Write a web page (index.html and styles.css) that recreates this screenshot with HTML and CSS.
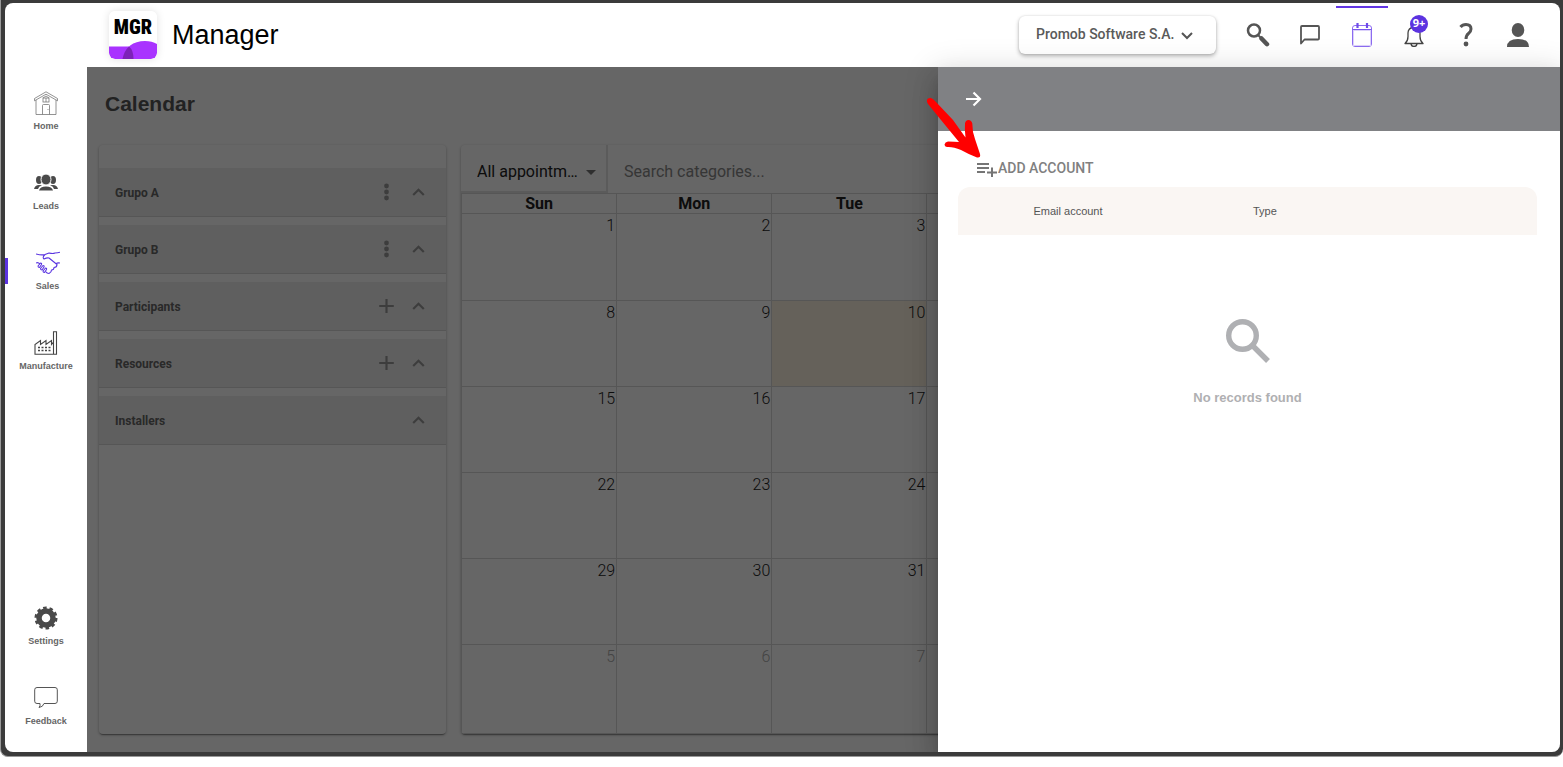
FILE: index.html
```html
<!DOCTYPE html>
<html lang="en">
<head>
<meta charset="utf-8">
<title>Manager - Calendar</title>
<link rel="stylesheet" href="styles.css">
</head>
<body>
<div class="frame">
<div class="app">
  <header class="topbar">
    <a class="brand" href="#">
      <svg class="brand-logo" viewBox="0 0 48 48" width="48" height="48" aria-hidden="true">
        <defs><clipPath id="tile"><rect width="48" height="48" rx="6"/></clipPath></defs>
        <g clip-path="url(#tile)">
          <rect width="48" height="48" fill="#fff"/>
          <path d="M0 35.500h20q4 4 4 12.500H0z" fill="#a933ff"/>
          <path d="M13.500 48C16 36 24 30 36 30q7 0 12 3v15z" fill="#a933ff"/>
          <path d="M13.500 48q1.500-8 6.500-12.500 4.500 3.500 4.500 12.500z" fill="#7d22b8"/>
        </g>
        <text class="brand-mark" x="24" y="23" text-anchor="middle">MGR</text>
      </svg>
      <span class="brand-name">Manager</span>
    </a>
    <div class="company">
      <select class="company-select" aria-label="Company"><option>Promob Software S.A.</option></select>
      <svg class="company-chevron" viewBox="0 0 12 8" width="12" height="8" aria-hidden="true"><path d="M1 1l5 5 5-5" fill="none" stroke="#555" stroke-width="2"/></svg>
    </div>
    <nav class="tools" aria-label="Tools">
      <button class="tool" aria-label="Search"><svg viewBox="0 0 24 24" width="24" height="24"><circle cx="8" cy="7.500" r="6" fill="none" stroke="#555" stroke-width="2.500"/><path d="M12 12l3 3" stroke="#555" stroke-width="2"/><path d="M15.500 15.500l5.500 5.700" stroke="#555" stroke-width="4.500" stroke-linecap="round"/></svg></button>
      <button class="tool" aria-label="Messages"><svg viewBox="0 0 24 24" width="24" height="24"><path d="M3 20.500V4q0-1 1-1h16q1 0 1 1v11.500q0 1-1 1H6.500z" fill="none" stroke="#555" stroke-width="1.800" stroke-linejoin="round"/></svg></button>
      <button class="tool tool-active" aria-label="Calendar"><svg viewBox="0 0 24 24" width="24" height="24"><g fill="none" stroke="#8c6cf0"><rect x="2.500" y="2.500" width="19" height="21" rx="2.500"/><rect x="3.500" y="7.500" width="17" height="15" stroke="#dcd2fb"/><path d="M2.500 6.500h19" stroke="#7a57ec"/></g><path d="M7.500 0v5M17 0v5" stroke="#6f4bea" stroke-width="2.200"/></svg></button>
      <button class="tool" aria-label="Notifications"><svg viewBox="0 0 24 24" width="24" height="24"><path d="M3 20.500q3-2.500 3-7V10q0-5 6-6 6 1 6 6v3.500q0 4.500 3 7zM9 21q.5 2.500 3 2.500t3-2.500" fill="none" stroke="#444" stroke-width="1.300" stroke-linejoin="round"/></svg><span class="badge">9+</span></button>
      <button class="tool" aria-label="Help"><svg viewBox="0 0 24 24" width="24" height="24"><path d="M6.500 4q2-2.500 5.500-2.500 5 0 5 4.500 0 2.500-2.500 4.500-2.500 2-2.500 5.500" fill="none" stroke="#555" stroke-width="3"/><circle cx="12" cy="21" r="2.400" fill="#555"/></svg></button>
      <button class="tool" aria-label="Profile"><svg viewBox="0 0 24 24" width="24" height="24" fill="#555"><ellipse cx="12" cy="7" rx="6.300" ry="7"/><path d="M1 24q0-8 11-8t11 8z"/></svg></button>
    </nav>
  </header>

  <div class="workspace">
    <nav class="sidebar" aria-label="Main">
      <a class="side-item" href="#"><svg viewBox="0 0 24 24" width="24" height="24" fill="none" stroke="#777" stroke-width=".8"><path d="M.5 7.500L12 .8l11.500 6.700v2.300L12 3.200.5 9.800zM2 9v14.500h20V9M8.500 23.500v-9q0-1 1-1h5q1 0 1 1v9M14 18v1"/><rect x="9" y="7" width="6" height="4"/><path d="M12 7v4M9 7l3-2 3 2"/></svg><span>Home</span></a>
      <a class="side-item" href="#"><svg viewBox="0 0 24 24" width="24" height="24" fill="#4a4a4a"><ellipse cx="5" cy="9" rx="3" ry="4"/><ellipse cx="19" cy="9" rx="3" ry="4"/><ellipse cx="12" cy="8.500" rx="5" ry="5.500" stroke="#fff"/><path d="M0 18q1-4 5-4l3 .3Q4.500 15.500 4 18zM24 18q-1-4-5-4l-3 .3q3.500 1.200 4 3.700zM5 19.500q1-4 7-4t7 4z"/></svg><span>Leads</span></a>
      <a class="side-item side-active" href="#"><svg viewBox="0 0 24 24" width="24" height="24" fill="none" stroke="#5a35e0" stroke-width="1.100" stroke-linejoin="round"><path d="M0 3q6 1.500 9 .5l4-1.500q4 1 6 0 3 0 5-.8M9 3.500q-3 3-1 4.500 3-1.500 5-1l8 6.500q0 3-3 3 0 2.500-2.500 2.500 0 2.500-2.500 3.500-2 0-3.500-2M24 12q-3-.5-4 1M0 12q2-1 4 1"/><path d="M2 15l2.500-3q1.500 0 1 1.500l-2 3q-1.500 0-1.500-1.500zM4.500 17.500l2.500-3q1.500 0 1 1.500l-2 3q-1.500 0-1.500-1.500zM7 20l2.500-3q1.500 0 1 1.500l-2 3q-1.500 0-1.500-1.500z"/></svg><span>Sales</span></a>
      <a class="side-item" href="#"><svg viewBox="0 0 24 24" width="24" height="24" fill="none" stroke="#444" stroke-width="1.100"><path d="M1 23.300V13.500L6.500 9.500v4L12 9.500v4l5.500-4v4L19.500 11V.7h3v22.600zM19.500 10v13"/><path d="M4 16.500h12.500M4 19.500h12.500" stroke-width="1.600" stroke-dasharray="2 1.500"/></svg><span>Manufacture</span></a>
      <a class="side-item side-bottom" href="#"><svg viewBox="0 0 24 24" width="24" height="24"><circle cx="12" cy="12" r="7" fill="none" stroke="#4a4a4a" stroke-width="5.500"/><circle cx="12" cy="12" r="10" fill="none" stroke="#4a4a4a" stroke-width="3" stroke-dasharray="3.500 2.783"/></svg><span>Settings</span></a>
      <a class="side-item" href="#"><svg viewBox="0 0 24 24" width="24" height="24" fill="none" stroke="#555"><path d="M3 1.500h18q2.300 0 2.300 2.300v11.400q0 2.300-2.300 2.300H10q-1 3.500-5 4 1.500-1.500 1-4H3Q.7 17.500.7 15.200V3.800Q.7 1.500 3 1.500z"/></svg><span>Feedback</span></a>
    </nav>

    <main class="page">
      <h1 class="page-title">Calendar</h1>
      <div class="panels">
        <section class="card groups" aria-label="Groups">
          <div class="group"><h2>Grupo A</h2><button aria-label="Options"><svg viewBox="0 0 24 24" width="24" height="24"><use href="#dots"/></svg></button><button aria-label="Collapse"><svg viewBox="0 0 24 24" width="24" height="24"><use href="#up"/></svg></button></div>
          <div class="group"><h2>Grupo B</h2><button aria-label="Options"><svg viewBox="0 0 24 24" width="24" height="24"><use href="#dots"/></svg></button><button aria-label="Collapse"><svg viewBox="0 0 24 24" width="24" height="24"><use href="#up"/></svg></button></div>
          <div class="group"><h2>Participants</h2><button aria-label="Add"><svg viewBox="0 0 24 24" width="24" height="24"><use href="#plus"/></svg></button><button aria-label="Collapse"><svg viewBox="0 0 24 24" width="24" height="24"><use href="#up"/></svg></button></div>
          <div class="group"><h2>Resources</h2><button aria-label="Add"><svg viewBox="0 0 24 24" width="24" height="24"><use href="#plus"/></svg></button><button aria-label="Collapse"><svg viewBox="0 0 24 24" width="24" height="24"><use href="#up"/></svg></button></div>
          <div class="group"><h2>Installers</h2><button aria-label="Collapse"><svg viewBox="0 0 24 24" width="24" height="24"><use href="#up"/></svg></button></div>
        </section>
        <section class="card calendar" aria-label="Month">
          <div class="filters">
            <div class="filter">
              <select class="filter-select" aria-label="Appointments"><option>All appointm…</option></select>
              <svg class="filter-caret" viewBox="0 0 10 5" width="10" height="5" aria-hidden="true"><path d="M0 0h10L5 5z" fill="#757575"/></svg>
            </div>
            <input class="filter-search" type="text" placeholder="Search categories..." aria-label="Search categories">
          </div>
          <div class="month-wrap">
          <table class="month">
            <thead><tr><th>Sun</th><th>Mon</th><th>Tue</th><th></th><th></th><th></th><th></th></tr></thead>
            <tbody>
              <tr><td>1</td><td>2</td><td>3</td><td></td><td></td><td></td><td></td></tr>
              <tr><td>8</td><td>9</td><td class="today">10</td><td></td><td></td><td></td><td></td></tr>
              <tr><td>15</td><td>16</td><td>17</td><td></td><td></td><td></td><td></td></tr>
              <tr><td>22</td><td>23</td><td>24</td><td></td><td></td><td></td><td></td></tr>
              <tr><td>29</td><td>30</td><td>31</td><td></td><td></td><td></td><td></td></tr>
              <tr><td class="other">5</td><td class="other">6</td><td class="other">7</td><td></td><td></td><td></td><td></td></tr>
            </tbody>
          </table>
          </div>
        </section>
      </div>
      <div class="backdrop"></div>
    </main>

    <aside class="drawer" aria-label="Accounts">
      <div class="drawer-head">
        <button class="drawer-close" aria-label="Close"><svg viewBox="0 0 16 16" width="16" height="16"><path d="M0 8h14M7.500 1.500L14 8l-6.500 6.500" fill="none" stroke="#fff" stroke-width="2.200"/></svg></button>
      </div>
      <div class="drawer-body">
        <button class="add-account"><svg viewBox="0 0 20 14" width="20" height="14" aria-hidden="true"><path d="M0 1h12M0 5h12M0 9h8M10 9.500h10M15 4.500v9.500" fill="none" stroke="#757575" stroke-width="2"/></svg>ADD ACCOUNT</button>
        <table class="accounts">
          <colgroup><col class="col-mark"><col class="col-text"><col class="col-text"><col></colgroup>
          <thead><tr><td></td><th>Email account</th><th>Type</th><td></td></tr></thead>
        </table>
        <div class="empty">
          <svg viewBox="0 0 44 44" width="44" height="44" aria-hidden="true"><circle cx="16.500" cy="16.500" r="13.800" fill="none" stroke="#afb0b3" stroke-width="5.400"/><path d="M27.500 27.500L42 42" stroke="#afb0b3" stroke-width="5.400"/></svg>
          <p>No records found</p>
        </div>
      </div>
      <svg class="pointer" viewBox="0 0 62 66" width="62" height="66" aria-hidden="true"><path d="M6 4Q8 4.500 11 8L28 26 40.500 43.500Q39.500 36 40 29.500 40.500 26 43.500 26T47.300 29.500Q47.300 38 50 45L55 60Q56 64 52 63.500 44 60.500 36 56 28 52.500 22 53 19.500 52.500 19.500 50.500 20 48 23 47.500 30 47.500 34 48L16 26 3 10Q1 7 2.500 5 4 3.500 6 4z" fill="#f00"/></svg>
    </aside>
  </div>
</div>
</div>
<svg class="symbols" width="0" height="0" aria-hidden="true">
  <symbol id="dots" viewBox="0 0 24 24"><g fill="#9a9a9a"><circle cx="12.500" cy="6" r="2.400"/><circle cx="12.500" cy="12" r="2.400"/><circle cx="12.500" cy="18" r="2.400"/></g></symbol>
  <symbol id="up" viewBox="0 0 24 24"><path d="M7.200 15l5.300-5.300 5.300 5.300" fill="none" stroke="#9a9a9a" stroke-width="2.200"/></symbol>
  <symbol id="plus" viewBox="0 0 24 24"><path d="M12.500 5v14M5.200 12h14.600" fill="none" stroke="#9a9a9a" stroke-width="2.200"/></symbol>
</svg>
</body>
</html>
```
FILE: styles.css
```css
* { box-sizing: border-box; }
body {
  margin: 0;
  height: 100vh;
  padding-bottom: 10px;
  display: flex;
  flex-direction: column;
  background: #fff;
  font-family: Roboto, sans-serif;
  color: #222;
}
button, select, input { font: inherit; color: inherit; border: 0; padding: 0; margin: 0; background: none; }
button { display: flex; align-items: center; justify-content: center; cursor: pointer; }
a { color: inherit; text-decoration: none; }
h1, h2, p { margin: 0; }
.symbols { position: absolute; }

.frame {
  flex: 1;
  min-height: 0;
  display: flex;
  padding: 3px 3px 4px 4px;
  background: #3b3b3b;
  border-left: 1px solid #999;
  border-bottom: 1px solid #999;
  border-radius: 0 0 8px 8px;
}
.app {
  flex: 1;
  min-width: 0;
  display: flex;
  flex-direction: column;
  overflow: hidden;
  background: #fff;
  border-radius: 8px;
}

/* Top bar */
.topbar { display: flex; align-items: center; height: 64px; padding: 0 16px 0 104px; flex: none; }
.brand { display: flex; align-items: center; gap: 15px; margin-right: auto; }
.brand-logo { border-radius: 6px; box-shadow: 0 0 8px rgba(0, 0, 0, .12); }
.brand-mark { font-family: "Liberation Sans Narrow", "Roboto Condensed", Roboto, sans-serif; font-weight: 900; font-size: 20px; }
.brand-name { font-family: "Liberation Sans", sans-serif; font-size: 27px; color: #000; }
.company {
  position: relative;
  display: flex;
  align-items: center;
  height: 38px;
  margin: 0 16px 0 0;
  border-radius: 6px;
  background: #fff;
  box-shadow: 0 2px 4px rgba(0, 0, 0, .3), 0 0 2px rgba(0, 0, 0, .12);
}
.company-select { appearance: none; height: 38px; width: 197px; padding: 0 0 2px 17px; font-size: 14px; font-weight: 500; color: #5a5a5a; border-radius: 6px; }
.company-chevron { position: absolute; right: 23px; top: 16px; pointer-events: none; }
.tools { display: flex; align-self: stretch; margin-top: 3px; }
.tool { position: relative; width: 52px; border-top: 2px solid transparent; padding-bottom: 6px; }
.tool-active { border-top-color: #6236e4; }
.badge {
  position: absolute;
  left: 22px;
  top: 7px;
  width: 18px;
  height: 18px;
  border-radius: 50%;
  background: #5c33e0;
  color: #fff;
  font: 700 11px/16px "Noto Sans", sans-serif;
}

/* Side navigation */
.workspace { position: relative; flex: 1; min-height: 0; display: flex; }
.sidebar { width: 82px; flex: none; display: flex; flex-direction: column; padding: 4px 0 6px; }
.side-item {
  position: relative;
  height: 80px;
  display: flex;
  flex-direction: column;
  align-items: center;
  justify-content: center;
  gap: 5px;
  font: 700 9px/12px "Liberation Sans", sans-serif;
  color: #666;
}
.side-bottom { margin-top: auto; }
.side-active { padding-left: 3px; }
.side-active::before { content: ""; position: absolute; left: 0; top: 27px; width: 3px; height: 26px; background: #5c33e0; }

/* Page */
.page { position: relative; flex: 1; min-width: 0; display: flex; flex-direction: column; padding: 0 12px 18px; }
.page-title { padding: 25px 6px 29px; font: 700 21px/24px "Liberation Sans", sans-serif; color: #555; }
.backdrop { position: absolute; inset: 0; background: rgba(0, 0, 0, .6); }
.panels { flex: 1; min-height: 0; display: flex; gap: 15px; }
.card { background: #fff; border-radius: 4px; box-shadow: 0 1px 3px rgba(0, 0, 0, .3), 0 2px 1px -1px rgba(0, 0, 0, .3); }
.groups { width: 347px; flex: none; display: flex; flex-direction: column; gap: 8px; padding-top: 23px; }
.group { height: 49px; display: flex; align-items: center; gap: 8px; padding: 0 16px; background: #eee; border-bottom: 1px solid #d6d6d6; }
.group h2 { flex: 1; padding-top: 2px; font-size: 12px; font-weight: 700; line-height: 16px; color: #666; }
.calendar { flex: 1; min-width: 0; display: flex; flex-direction: column; overflow: hidden; }
.filters { height: 48px; flex: none; display: flex; padding-right: 150px; }
.filter { position: relative; width: 147px; flex: none; border: 1px solid #e4e4e4; border-width: 0 2px 2px 0; }
.filter-select { appearance: none; width: 100%; height: 100%; padding: 6px 24px 0 16px; font-size: 16px; color: #222; }
.filter-caret { position: absolute; right: 10px; top: 25px; pointer-events: none; }
.filter-search { flex: 1; min-width: 0; padding: 4px 16px 0; font-size: 16px; }
.filter-search::placeholder { color: #888; }
.month-wrap { flex: 1; min-height: 0; display: grid; }
.month { width: 100%; height: 100%; table-layout: fixed; border-collapse: collapse; }
.month th { height: 20px; padding: 0; font-size: 16px; font-weight: 700; line-height: 19px; color: #222; border: 1px solid #d6d6d6; }
.month td { padding: 2px 1px 0 0; vertical-align: top; text-align: right; font-size: 16px; font-weight: 300; line-height: 20px; border: 1px solid #d6d6d6; }
.month tr:not(:last-child) td { height: 86px; }
.month tr:first-child td { height: 87px; }
.month .today { background: #fcf3e1; }
.month .other { color: #aaa; }

/* Drawer */
.drawer {
  position: absolute;
  top: 0;
  right: 0;
  bottom: 0;
  width: 40%;
  background: #fff;
  box-shadow: 0 8px 10px -5px rgba(0, 0, 0, .2), 0 16px 24px 2px rgba(0, 0, 0, .14), 0 6px 30px 5px rgba(0, 0, 0, .12);
}
.drawer-head { height: 64px; display: flex; align-items: center; padding-left: 28px; background: #808184; }
.drawer-body { padding: 26px 23px 0 20px; }
.add-account { gap: 1px; margin-left: 19px; height: 22px; font-size: 14px; font-weight: 500; color: #808080; }
.add-account svg { margin-top: 4px; }
.accounts { width: 100%; margin-top: 8px; table-layout: fixed; border-collapse: collapse; background: #faf6f3; border-radius: 12px 12px 0 0; }
.accounts th { height: 48px; padding: 0; font: 400 11px/16px "Liberation Sans", sans-serif; color: #555; }
.col-mark { width: 2%; }
.col-text { width: 34%; }
.empty { display: flex; flex-direction: column; align-items: center; gap: 25px; margin-top: 84px; }
.empty p { font: 700 13px/20px "Liberation Sans", sans-serif; color: #b0b0b2; }
.pointer { position: absolute; left: -13px; top: 27px; pointer-events: none; }
```
